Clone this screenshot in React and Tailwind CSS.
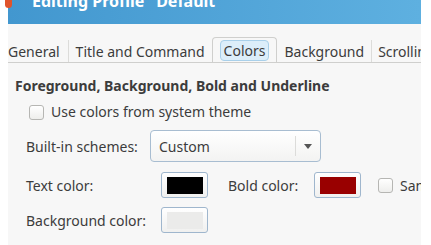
import React from 'react';

const font = { fontFamily: '"Noto Sans", "DejaVu Sans", sans-serif' };

function Checkbox() {
  return <div className="w-[15px] h-[15px] rounded-[3px] border border-[#b6b6b3] bg-gradient-to-b from-white to-[#eeeeec] shrink-0" />;
}

function ColorButton({ color }) {
  return (
    <div className="w-[47px] h-[26px] shrink-0 rounded-[3px] border border-[#9fb6cd] bg-gradient-to-b from-white to-[#f0f0ef] flex items-center justify-center">
      <div className="w-[36px] h-[17px]" style={{ background: color }} />
    </div>
  );
}

export default function App() {
  return (
    <div className="w-[431px] h-[245px] bg-white overflow-hidden relative text-[#3c3c3c]" style={font}>
      <div className="absolute left-[5px] top-[-4px] w-[7px] h-[12px] rounded-full bg-[#e0532b]" />
      <div className="mx-[8px] w-[413px] h-[245px] bg-[#f7f7f7] flex flex-col overflow-hidden">
        <div className="h-[24px] shrink-0 bg-gradient-to-r from-[#4297cf] to-[#5eb0e0] overflow-hidden">
          <div className="ml-[24px] mt-[-9px] text-white font-bold text-[16px] leading-[20px] whitespace-nowrap">Editing Profile "Default"</div>
        </div>
        <div className="mt-[13px] h-[26px] shrink-0 flex items-end border-b border-[#cfcfcd] text-[14px] whitespace-nowrap overflow-hidden">
          <div className="pr-[8px] h-[22px] flex items-center border-r border-[#dcdcda] shrink-0">General</div>
          <div className="px-[7px] h-[22px] flex items-center shrink-0">Title and Command</div>
          <div className="h-[26px] px-[7px] flex items-center border border-b-0 border-[#cfcfcd] rounded-t-[4px] bg-[#f7f7f7] mb-[-1px] shrink-0">
            <div className="px-[3px] h-[21px] flex items-center rounded-[4px] border border-[#a9d0ea] bg-[#dceefa]">Colors</div>
          </div>
          <div className="px-[7px] h-[22px] flex items-center border-r border-[#dcdcda] shrink-0">Background</div>
          <div className="px-[6px] h-[22px] flex items-center shrink-0">Scrolling</div>
        </div>
        <div className="mt-[13px] ml-[7px] font-bold text-[14px] leading-[20px] whitespace-nowrap">Foreground, Background, Bold and Underline</div>
        <div className="mt-[6px] ml-[21px] flex items-center gap-[7px] text-[14px] leading-[20px]">
          <Checkbox />
          <span>Use colors from system theme</span>
        </div>
        <div className="mt-[8px] ml-[18px] flex items-center text-[14px]">
          <span className="w-[124px] shrink-0">Built-in schemes:</span>
          <div className="w-[171px] h-[32px] shrink-0 rounded-[4px] border border-[#a8bdd1] bg-gradient-to-b from-white to-[#f3f3f2] flex items-center">
            <span className="flex-1 pl-[8px]">Custom</span>
            <div className="w-px h-[20px] bg-[#dcdcda]" />
            <div className="w-[24px] flex justify-center">
              <div className="w-0 h-0 border-l-[4px] border-r-[4px] border-t-[5px] border-l-transparent border-r-transparent border-t-[#555]" />
            </div>
          </div>
        </div>
        <div className="mt-[10px] ml-[18px] flex items-center text-[14px] whitespace-nowrap">
          <span className="w-[135px] shrink-0">Text color:</span>
          <ColorButton color="#000000" />
          <span className="ml-[20px] w-[86px] shrink-0">Bold color:</span>
          <ColorButton color="#990000" />
          <div className="ml-[17px] flex items-center gap-[7px] shrink-0">
            <Checkbox />
            <span>Same as text color</span>
          </div>
        </div>
        <div className="mt-[9px] ml-[18px] flex items-center text-[14px]">
          <span className="w-[135px] shrink-0">Background color:</span>
          <ColorButton color="#ebebea" />
        </div>
      </div>
    </div>
  );
}
